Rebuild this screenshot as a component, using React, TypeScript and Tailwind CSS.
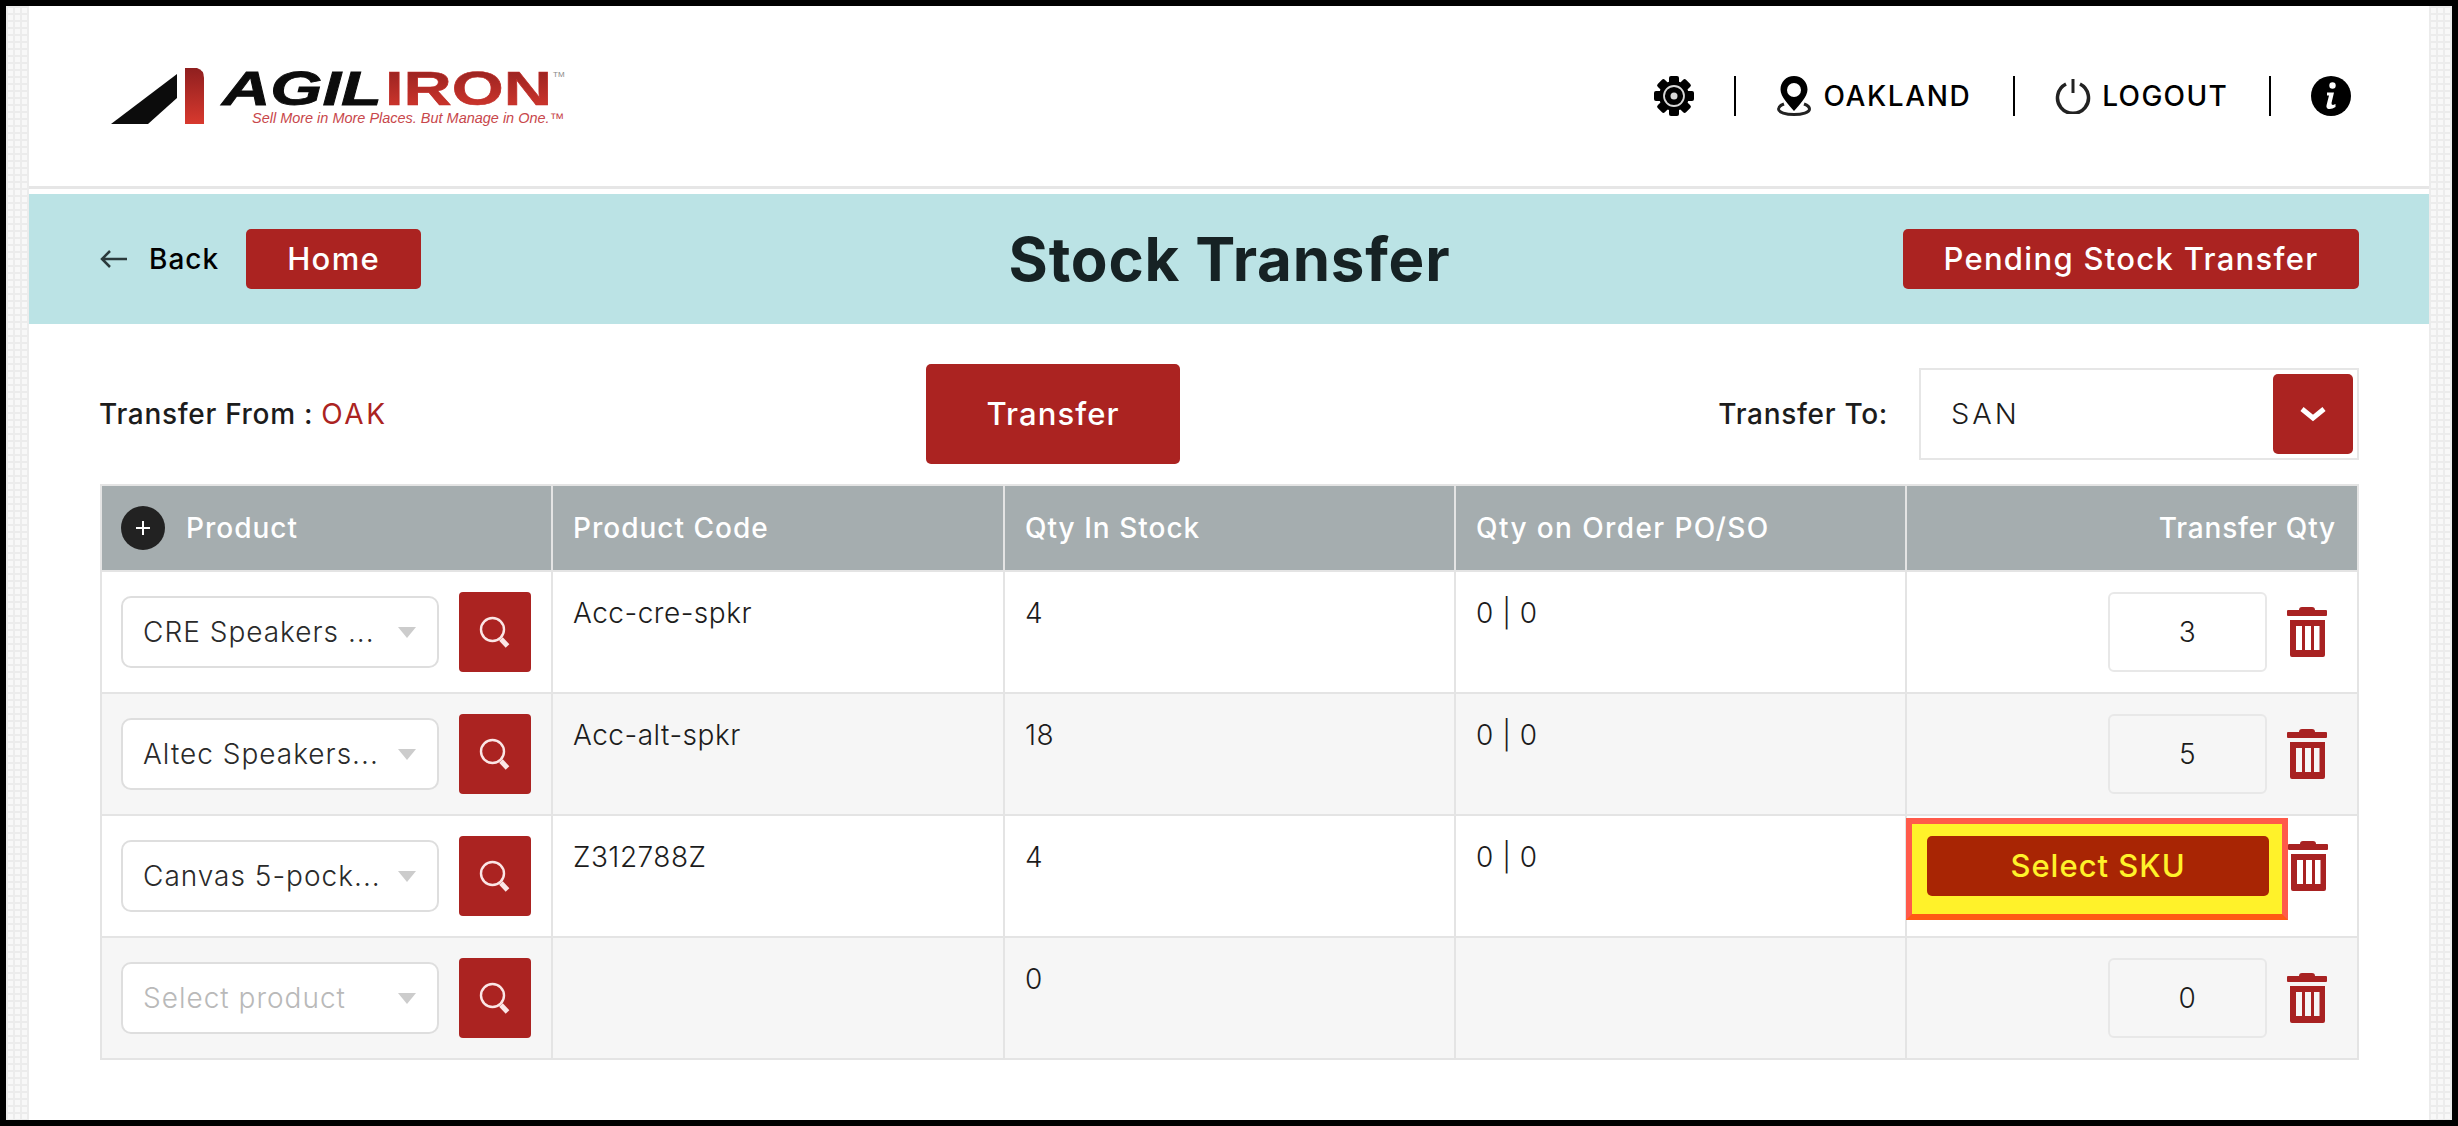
const RED = "bg-[#ab2321]";

type Row = {
  product: string;
  placeholder?: boolean;
  code: string;
  stock: string;
  order: string;
  qty: string;
  selectSku?: boolean;
};

const ROWS: Row[] = [
  { product: "CRE Speakers ...", code: "Acc-cre-spkr", stock: "4", order: "0 | 0", qty: "3" },
  { product: "Altec Speakers...", code: "Acc-alt-spkr", stock: "18", order: "0 | 0", qty: "5" },
  { product: "Canvas 5-pock...", code: "Z312788Z", stock: "4", order: "0 | 0", qty: "", selectSku: true },
  { product: "Select product", placeholder: true, code: "", stock: "0", order: "", qty: "0" },
];

function Logo() {
  return (
    <svg width="460" height="84" viewBox="0 -14 460 84" className="block">
      <defs>
        <linearGradient id="ironRed" x1="0" y1="0" x2="0" y2="1">
          <stop offset="0" stopColor="#8f1f1f" />
          <stop offset="1" stopColor="#d8392e" />
        </linearGradient>
      </defs>
      <polygon points="1,56 67,6 67,30 38,56" fill="#0c0c0c" />
      <path d="M75 0 H87 Q94 2 94 10 V56 H75 Z" fill="url(#ironRed)" />
      <text
        x="112"
        y="37"
        fontFamily="Liberation Sans"
        fontWeight="700"
        fontStyle="italic"
        fontSize="48"
        textLength="160"
        lengthAdjust="spacingAndGlyphs"
        fill="#0c0c0c"
        stroke="#0c0c0c"
        strokeWidth="0.8"
      >
        AGIL
      </text>
      <text
        x="275"
        y="37"
        fontFamily="Liberation Sans"
        fontWeight="700"
        fontSize="48"
        textLength="167"
        lengthAdjust="spacingAndGlyphs"
        fill="url(#ironRed)"
        stroke="#c02c27"
        strokeWidth="0.6"
      >
        IRON
      </text>
      <text x="443" y="9" fontFamily="Liberation Sans" fontSize="8" fill="#888888">
        TM
      </text>
      <text
        x="142"
        y="55"
        fontFamily="Liberation Sans"
        fontStyle="italic"
        fontSize="14"
        textLength="312"
        lengthAdjust="spacingAndGlyphs"
        fill="#c8474b"
      >
        Sell More in More Places. But Manage in One.™
      </text>
    </svg>
  );
}

function GearIcon() {
  return (
    <svg width="40" height="40" viewBox="0 0 40 40" className="block">
      {[0, 45, 90, 135, 180, 225, 270, 315].map((a) => (
        <rect key={a} x="15" y="0" width="10" height="9" rx="2" fill="#000" transform={`rotate(${a} 20 20)`} />
      ))}
      <circle cx="20" cy="20" r="15" fill="#000" />
      <circle cx="20" cy="20" r="10" fill="none" stroke="#d8d8d8" strokeWidth="1.8" />
      <circle cx="20" cy="20" r="3.5" fill="#d8d8d8" />
    </svg>
  );
}

function PinIcon() {
  return (
    <svg width="34" height="40" viewBox="0 0 34 40" className="block">
      <path d="M17 0 C9 0 3.5 6 3.5 13.5 C3.5 21 12 29 17 35 C22 29 30.5 21 30.5 13.5 C30.5 6 25 0 17 0 Z" fill="#000" />
      <circle cx="17" cy="14" r="7" fill="#fff" />
      <path
        d="M7 28 C3 29.5 1.5 31 1.5 33 C1.5 36.5 9 38.5 17 38.5 C25 38.5 32.5 36.5 32.5 33 C32.5 31 31 29.5 27 28"
        fill="none"
        stroke="#222"
        strokeWidth="3"
      />
    </svg>
  );
}

function PowerIcon() {
  return (
    <svg width="36" height="36" viewBox="0 0 36 36" className="block">
      <path d="M11 6 A15.500 15.500 0 1 0 25 6" fill="none" stroke="#222" strokeWidth="3.500" />
      <path d="M18 1 V15" fill="none" stroke="#222" strokeWidth="3" />
    </svg>
  );
}

function InfoIcon() {
  return (
    <svg width="40" height="40" viewBox="0 0 40 40" className="block">
      <circle cx="20" cy="20" r="20" fill="#000" />
      <circle cx="21.500" cy="9.500" r="3.200" fill="#fff" />
      <path d="M16 16.500 H23 L20.500 27 Q20.300 29 22 29 L24.500 28 V31 Q21 33.500 17.500 33 Q14.800 32.200 15.600 29 L18 19.500 L16 19.500 Z" fill="#fff" />
    </svg>
  );
}

function SearchIcon() {
  return (
    <svg width="32" height="32" viewBox="0 0 32 32" className="block">
      <circle cx="13.500" cy="13.500" r="11.500" fill="none" stroke="#fbe6e6" strokeWidth="2.400" />
      <path d="M22 23 L28.500 30" fill="none" stroke="#fbe6e6" strokeWidth="5" />
    </svg>
  );
}

function TrashIcon() {
  return (
    <svg width="40" height="50" viewBox="0 0 40 50" className="block shrink-0">
      <path d="M12 3 Q12 0 15 0 H25 Q28 0 28 3 Z" fill="#a82222" />
      <rect x="0" y="3" width="40" height="6" rx="1" fill="#a82222" />
      <path
        fillRule="evenodd"
        d="M3 13 H38 V48 Q38 50 36 50 H5 Q3 50 3 48 Z M9 19 V43 H15 V19 Z M18 19 V43 H24 V19 Z M27 19 V43 H32.500 V19 Z"
        fill="#a82222"
      />
    </svg>
  );
}

function HeaderDivider() {
  return <div className="h-[40px] w-[2px] bg-black" />;
}

export default function App() {
  return (
    <div className="h-screen overflow-hidden bg-black p-[6px] font-['Inter',sans-serif] text-[#1c1c1c]">
      <div className="flex h-full bg-white">
        <div className="w-[23px] shrink-0 bg-[#f8f8f8] bg-[linear-gradient(#ececec_2px,transparent_2px),linear-gradient(90deg,#ececec_2px,transparent_2px)] bg-[size:7px_7px]" />

        <main className="min-w-0 flex-1">
          <header className="flex h-[183px] items-center justify-between border-b-[3px] border-[#e6e6e6] pr-[78px] pl-[81px]">
            <Logo />
            <div className="flex items-center text-[28px] font-medium text-black">
              <GearIcon />
              <div className="ml-[40px] mr-[41px]">
                <HeaderDivider />
              </div>
              <PinIcon />
              <span className="ml-[12px] tracking-[1.6px]">OAKLAND</span>
              <div className="ml-[42px] mr-[40px]">
                <HeaderDivider />
              </div>
              <PowerIcon />
              <span className="ml-[11px] tracking-[1.3px]">LOGOUT</span>
              <div className="ml-[41px] mr-[40px]">
                <HeaderDivider />
              </div>
              <InfoIcon />
            </div>
          </header>

          <section className="mt-[5px] grid h-[130px] grid-cols-[1fr_auto_1fr] items-center bg-[#bbe3e5] pr-[70px] pl-[71px]">
            <div className="flex items-center">
              <svg width="28" height="20" viewBox="0 0 28 20" className="block">
                <path d="M27 10 H2 M10 2 L2 10 L10 18" fill="none" stroke="#2b3a3c" strokeWidth="2.500" />
              </svg>
              <span className="ml-[21px] text-[28px] font-medium tracking-[1px] text-black">Back</span>
              <button className={`ml-[27px] h-[60px] w-[175px] rounded-[5px] ${RED} text-[31px] font-medium tracking-[1.3px] text-white`}>
                Home
              </button>
            </div>
            <h1 className="text-[60px] font-bold leading-none tracking-[0.8px] text-[#162224]">Stock Transfer</h1>
            <div className="flex justify-end">
              <button className={`h-[60px] w-[456px] rounded-[5px] ${RED} text-[31px] font-medium tracking-[1.3px] text-white`}>
                Pending Stock Transfer
              </button>
            </div>
          </section>

          <section className="pt-[40px] pr-[70px] pl-[71px]">
            <div className="grid grid-cols-[826px_254px_1fr] items-center">
              <div className="-ml-px text-[28px] font-medium tracking-[0.7px]">
                Transfer From : <span className="font-normal tracking-[2.6px] text-[#ab2321]">OAK</span>
              </div>
              <button className={`h-[100px] w-[254px] rounded-[5px] ${RED} text-[31px] font-medium tracking-[1.1px] text-white`}>
                Transfer
              </button>
              <div className="flex items-center justify-end">
                <span className="mr-[31px] text-[28px] font-medium tracking-[0.7px]">Transfer To:</span>
                <div className="flex h-[92px] w-[440px] items-center justify-between border-2 border-[#e6e6e6] pr-[4px] pl-[30px]">
                  <span className="text-[29px] font-light tracking-[3px]">SAN</span>
                  <div className={`flex h-[80px] w-[80px] items-center justify-center rounded-[5px] ${RED}`}>
                    <svg width="28" height="16" viewBox="0 0 28 16" className="block">
                      <path d="M3 3 L14 12 L25 3" fill="none" stroke="#fff" strokeWidth="5" />
                    </svg>
                  </div>
                </div>
              </div>
            </div>

            <div className="mt-[20px] border-2 border-[#e4e4e4] text-[28px]">
              <div className="grid h-[86px] grid-cols-[451px_452px_451px_451px_1fr] border-b-2 border-[#e4e4e4] bg-[#a5adaf] font-medium tracking-[1px] text-white">
                <div className="flex items-center border-r-2 border-[#e4e4e4] pl-[19px]">
                  <span className="flex h-[44px] w-[44px] items-center justify-center rounded-full bg-[#222222]">
                    <svg width="16" height="16" viewBox="0 0 16 16" className="block">
                      <path d="M8 1 V15 M1 8 H15" fill="none" stroke="#fff" strokeWidth="2" />
                    </svg>
                  </span>
                  <span className="ml-[21px]">Product</span>
                </div>
                <div className="flex items-center border-r-2 border-[#e4e4e4] pl-[20px]">Product Code</div>
                <div className="flex items-center border-r-2 border-[#e4e4e4] pl-[20px]">Qty In Stock</div>
                <div className="flex items-center border-r-2 border-[#e4e4e4] pl-[20px] tracking-[1.4px]">Qty on Order PO/SO</div>
                <div className="flex items-center justify-end pr-[21px] tracking-[0.8px]">Transfer Qty</div>
              </div>

              {ROWS.map((row, i) => (
                <div
                  key={row.product}
                  className={`grid grid-cols-[451px_452px_451px_451px_1fr] font-light tracking-[0.5px] ${i < ROWS.length - 1 ? "h-[122px] border-b-2 border-[#e4e4e4]" : "h-[120px]"} ${i % 2 === 1 ? "bg-[#f6f6f6]" : "bg-white"}`}
                >
                  <div className="flex items-center border-r-2 border-[#e4e4e4] pl-[19px]">
                    <div className="flex h-[72px] w-[318px] items-center justify-between rounded-[10px] border-2 border-[#dedede] bg-white pr-[21px] pl-[20px] tracking-[1px]">
                      <span className={row.placeholder ? "text-[#b9b9b9]" : "text-[#2a2a2a]"}>{row.product}</span>
                      <svg width="18" height="11" viewBox="0 0 18 11" className="block">
                        <polygon points="0,0 18,0 9,11" fill="#cccccc" />
                      </svg>
                    </div>
                    <button className={`ml-[20px] flex h-[80px] w-[72px] items-center justify-center rounded-[4px] ${RED}`}>
                      <SearchIcon />
                    </button>
                  </div>
                  <div className="border-r-2 border-[#e4e4e4] pt-[21px] pl-[20px] leading-[40px]">{row.code}</div>
                  <div className="border-r-2 border-[#e4e4e4] pt-[21px] pl-[20px] leading-[40px]">{row.stock}</div>
                  <div className="border-r-2 border-[#e4e4e4] pt-[21px] pl-[20px] leading-[40px]">{row.order}</div>
                  {row.selectSku ? (
                    <div className="flex min-w-0 items-start justify-end pr-[29px]">
                      <div className="mt-[2px] -ml-[1px] h-[102px] w-[382px] shrink-0 border-[6px] border-[#ff5a4a] border-b-[#ff5a14] bg-[#fff22a] pt-[12px] pl-[15px]">
                        <button className="h-[60px] w-[342px] rounded-[5px] bg-[#a82504] text-[31px] font-medium tracking-[1px] text-[#fff22a]">
                          Select SKU
                        </button>
                      </div>
                      <div className="mt-[25px]">
                        <TrashIcon />
                      </div>
                    </div>
                  ) : (
                    <div className="flex min-w-0 items-center justify-end pr-[30px]">
                      <div className="flex h-[80px] w-[159px] items-center justify-center rounded-[6px] border-2 border-[#e8e8e8]">
                        {row.qty}
                      </div>
                      <div className="ml-[20px]">
                        <TrashIcon />
                      </div>
                    </div>
                  )}
                </div>
              ))}
            </div>
          </section>
        </main>

        <div className="w-[23px] shrink-0 bg-[#f8f8f8] bg-[linear-gradient(#ececec_2px,transparent_2px),linear-gradient(90deg,#ececec_2px,transparent_2px)] bg-[size:7px_7px]" />
      </div>
    </div>
  );
}
